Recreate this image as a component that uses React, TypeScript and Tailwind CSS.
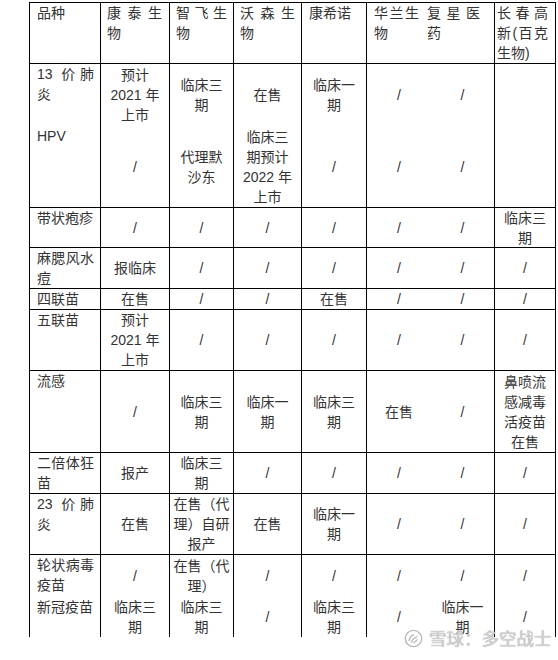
import type { ReactNode } from "react";

type V = string | string[];

// column widths include the right border line
const colW = ["w-[71px]", "w-[69px]", "w-[64px]", "w-[68px]", "w-[65px]", "w-[64px]", "w-[64px]", "w-[61px]"];

const headW = ["w-[71px]", "w-[69px]", "w-[64px]", "w-[68px]", "w-[65px]", "w-[54px]", "w-[74px]", "w-[61px]"];
const headP = [
    "pl-[7px] pr-[6px]",
    "pl-[6px] pr-[7px]",
    "pl-[6px] pr-[6px]",
    "pl-[6px] pr-[6px]",
    "pl-[7px] pr-[6px]",
    "pl-[7px] pr-[2px]",
    "pl-[6px] pr-[14px]",
    "pl-[2px] pr-[7px]",
];
const heads = ["品种", "康泰生物", "智飞生物", "沃森生物", "康希诺", "华兰生物", "复星医药", "长春高新(百克生物)"];

function Lines({ v }: { v: V }) {
    const arr = Array.isArray(v) ? v : [v];
    return <div className="text-center whitespace-nowrap">
        {arr.map((t, i) => <div key={i}>{t}</div>)}
    </div>
}

function Name({ children }: { children: ReactNode }) {
    return <div className="pl-[7px] pr-[6px] text-justify">{children}</div>
}

function Row({ h, name, vals }: { h: string, name: string, vals: V[] }) {
    return <div className={`flex ${h}`}>
        <div className={`${colW[0]} shrink-0 border-r border-b border-black`}>
            <Name>{name}</Name>
        </div>
        {vals.map((v, i) => (
            <div key={i} className={`${colW[i + 1]} shrink-0 flex items-center justify-center border-b border-black ${i === 4 ? "" : "border-r"}`}>
                <Lines v={v} />
            </div>
        ))}
    </div>
}

function SplitRow({ h, ha, names, a, b, last }: { h: string, ha: string, names: [string, string], a: V[], b: V[], last?: boolean }) {
    const edge = last ? "" : "border-b";
    return <div className={`flex ${h}`}>
        <div className={`${colW[0]} shrink-0 flex flex-col border-r border-black ${edge}`}>
            <div className={ha}><Name>{names[0]}</Name></div>
            <div className="flex-1"><Name>{names[1]}</Name></div>
        </div>
        {a.map((v, i) => (
            <div key={i} className={`${colW[i + 1]} shrink-0 flex flex-col border-black ${edge} ${i === 4 ? "" : "border-r"}`}>
                <div className={`${ha} flex items-center justify-center`}>{v.length ? <Lines v={v} /> : null}</div>
                <div className="flex-1 flex items-center justify-center">{b[i].length ? <Lines v={b[i]} /> : null}</div>
            </div>
        ))}
    </div>
}

export default function App() {
    return <div lang="zh-CN" className="relative w-[558px] h-[660px] overflow-hidden bg-white pt-[2px] pl-[29px] text-[14px] leading-[20px] text-[#333] font-['Liberation_Sans','Noto_Sans_CJK_SC',sans-serif]">
        <div className="w-[527px] border-l border-t border-black">
            <div className="flex h-[61px]">
                {heads.map((t, i) => (
                    <div key={i} className={`${headW[i]} ${headP[i]} shrink-0 border-b border-black text-justify ${i === 5 ? "" : "border-r"}`}>{t}</div>
                ))}
            </div>
            <SplitRow
                h="h-[144px]"
                ha="h-[62px]"
                names={["13 价肺炎", "HPV"]}
                a={[["预计", "2021 年", "上市"], ["临床三", "期"], "在售", ["临床一", "期"], "/", "/", []]}
                b={["/", ["代理默", "沙东"], ["临床三", "期预计", "2022 年", "上市"], "/", "/", "/", []]}
            />
            <Row h="h-[40px]" name="带状疱疹" vals={["/", "/", "/", "/", "/", "/", ["临床三", "期"]]} />
            <Row h="h-[41px]" name="麻腮风水痘" vals={["报临床", "/", "/", "/", "/", "/", "/"]} />
            <Row h="h-[21px]" name="四联苗" vals={["在售", "/", "/", "在售", "/", "/", "/"]} />
            <Row h="h-[61px]" name="五联苗" vals={[["预计", "2021 年", "上市"], "/", "/", "/", "/", "/", "/"]} />
            <Row h="h-[82px]" name="流感" vals={["/", ["临床三", "期"], ["临床一", "期"], ["临床三", "期"], "在售", "/", ["鼻喷流", "感减毒", "活疫苗", "在售"]]} />
            <Row h="h-[41px]" name="二倍体狂苗" vals={["报产", ["临床三", "期"], "/", "/", "/", "/", "/"]} />
            <Row h="h-[61px]" name="23 价肺炎" vals={["在售", ["在售（代", "理）自研", "报产"], "在售", ["临床一", "期"], "/", "/", "/"]} />
            <SplitRow
                h="h-[82px]"
                ha="h-[42px]"
                names={["轮状病毒疫苗", "新冠疫苗"]}
                a={["/", ["在售（代", "理）"], "/", "/", "/", "/", "/"]}
                b={[["临床三", "期"], ["临床三", "期"], "/", ["临床三", "期"], "/", ["临床一", "期"], "/"]}
                last
            />
        </div>

        <div className="absolute left-[404px] top-[628px] flex items-center gap-[6px] text-[#d0d0d0] [text-shadow:0_0_1px_#9a9a9a] text-[17.5px] leading-[20px] font-['Noto_Sans_CJK_SC',sans-serif]">
            <svg width="19" height="19" viewBox="0 0 20 20" fill="none" stroke="#b8b8b8" strokeWidth="1.4">
                <circle cx="10" cy="10" r="8.6" />
                <path d="M5.2 12.8c0.6-3.6 2.6-6 5.4-7" />
                <path d="M7.6 14.2c1.4-3.2 3.4-5.2 6.4-6.2" />
                <path d="M9.6 14.6c1.6-0.4 3.2-1.6 4.6-3.6" />
            </svg>
            <span>雪球：多空战士</span>
        </div>
    </div>
}
